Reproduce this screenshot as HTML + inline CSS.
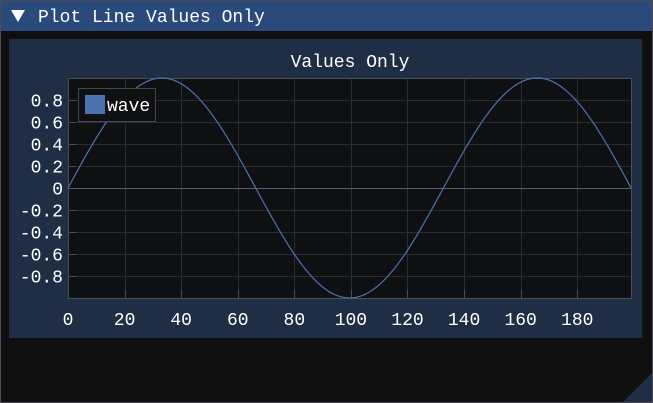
<!DOCTYPE html>
<html><head><meta charset="utf-8"><style>
body{margin:0;width:653px;height:403px;background:#0f0f10;overflow:hidden;font-family:"Liberation Mono","DejaVu Sans Mono",monospace}
</style></head><body>
<svg width="653" height="403" xmlns="http://www.w3.org/2000/svg" style="position:absolute;left:0;top:0">
<rect x="0.5" y="0.5" width="652" height="402" fill="#0f0f10" stroke="#4a4a55"/>
<rect x="1" y="1" width="651" height="30" fill="#294a7a"/>
<polygon points="11,10 25,10 18,22" fill="#fff"/>
<text x="38" y="22" fill="#fff" font-size="18" font-family="Liberation Mono, monospace">Plot Line Values Only</text>
<rect x="9" y="39" width="633" height="299" fill="#1f2d45"/>
<text x="350" y="67" fill="#fff" font-size="18" text-anchor="middle" font-family="Liberation Mono, monospace">Values Only</text>
<rect x="68" y="78" width="563" height="220" fill="#0f1012"/>
<g id="grid" stroke="#2a2c30" stroke-width="1"></g>
<rect x="68.5" y="78.5" width="563" height="220" fill="none" stroke="#4a4e56"/>
<line x1="68" y1="188.5" x2="631" y2="188.5" stroke="#5a5e66"/>
<g id="labels" fill="#fff" font-size="18" font-family="Liberation Mono, monospace"></g>
<path id="wave" fill="none" stroke="#4c72b0" stroke-width="1.2"/>
<rect x="78.5" y="88.5" width="77" height="33" fill="#0f1012" stroke="#44464c"/>
<rect x="85" y="95" width="20" height="19" fill="#4c72b0"/>
<text x="107" y="111" fill="#fff" font-size="18" font-family="Liberation Mono, monospace">wave</text>
<polygon points="652,373 652,402 623,402" fill="#1f2d45"/>
</svg>
<script>
var NS="http://www.w3.org/2000/svg",g=document.getElementById('grid'),L=document.getElementById('labels');
function X(v){return 68+v*563/199}function Y(v){return 188-v*110}
function el(p,n,a,t){var e=document.createElementNS(NS,n);for(var k in a)e.setAttribute(k,a[k]);if(t)e.textContent=t;p.appendChild(e);}
for(var i=0;i<=180;i+=20){var x=Math.round(X(i))+.5;el(g,'line',{x1:x,y1:78,x2:x,y2:298});el(g,'line',{x1:x,y1:290,x2:x,y2:298,stroke:'#4a4e56'});el(L,'text',{x:X(i),y:325,'text-anchor':'middle'},String(i));}
for(var j=-8;j<=8;j+=2){var v=j/10,y=Math.round(Y(v))+.5;el(g,'line',{x1:68,y1:y,x2:631,y2:y});el(g,'line',{x1:68,y1:y,x2:76,y2:y,stroke:'#4a4e56'});el(L,'text',{x:63,y:y+6,'text-anchor':'end'},j==0?'0':v.toFixed(1));}
var d='';for(var k=0;k<=199;k++){d+=(k?'L':'M')+X(k).toFixed(2)+','+Y(Math.sin(2*Math.PI*k/132.7)).toFixed(2);}
document.getElementById('wave').setAttribute('d',d);
</script>
</body></html>
